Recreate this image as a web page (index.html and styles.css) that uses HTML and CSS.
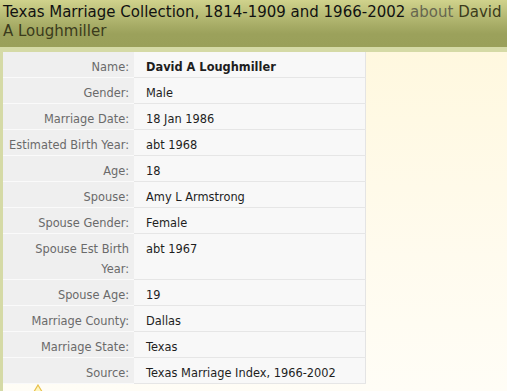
FILE: index.html
```html
<!DOCTYPE html>
<html>
<head>
<meta charset="utf-8">
<link rel="stylesheet" href="styles.css">
</head>
<body>
<div class="header">
  <h1 class="title">Texas Marriage Collection, 1814-1909 and 1966-2002 <span class="about">about</span> <span class="person">David A Loughmiller</span></h1>
</div>
<div class="content">
  <table class="record">
    <tr><th>Name:</th><td class="strong">David A Loughmiller</td></tr>
    <tr><th>Gender:</th><td>Male</td></tr>
    <tr><th>Marriage Date:</th><td>18 Jan 1986</td></tr>
    <tr><th>Estimated Birth Year:</th><td>abt 1968</td></tr>
    <tr><th>Age:</th><td>18</td></tr>
    <tr><th>Spouse:</th><td>Amy L Armstrong</td></tr>
    <tr><th>Spouse Gender:</th><td>Female</td></tr>
    <tr><th>Spouse Est Birth Year:</th><td>abt 1967</td></tr>
    <tr><th>Spouse Age:</th><td>19</td></tr>
    <tr><th>Marriage County:</th><td>Dallas</td></tr>
    <tr><th>Marriage State:</th><td>Texas</td></tr>
    <tr><th>Source:</th><td>Texas Marriage Index, 1966-2002</td></tr>
  </table>
  <div class="note">
    <svg class="warn" width="14" height="12" viewBox="0 0 14 12"><path d="M7 1 L13 11 L1 11 Z" fill="#fff6c0" stroke="#e8c04a" stroke-width="1.2"/></svg>
  </div>
</div>
</body>
</html>
```
FILE: styles.css
```css
html, body {
  margin: 0;
  padding: 0;
}
body {
  background: #fffbee;
  font-family: "DejaVu Sans", Verdana, sans-serif;
  overflow: hidden;
  height: 391px;
}
.header {
  height: 47px;
  padding: 0 3px;
  background: linear-gradient(to bottom, #d0d28c 0px, #a9ae68 24px, #9ba15b 34px, #9aa05a 47px);
  box-sizing: border-box;
}
.title {
  margin: 0;
  padding-top: 3px;
  font-size: 15px;
  font-weight: normal;
  line-height: 19px;
  color: #111;
}
.about {
  color: #66664f;
}
.person {
  color: #3b3b1c;
}
.content {
  border-left: 3px solid #d5daa6;
  border-top: 5px solid #d5daa6;
  background: linear-gradient(to bottom, #fff8df 0%, #fffbee 60%, #fffdf6 100%);
  height: 339px;
  overflow: hidden;
}
.record {
  border-collapse: collapse;
  table-layout: fixed;
  width: 363px;
  border-right: 1px solid #e4e4e4;
  font-size: 11.4px;
}
.record th {
  width: 122px;
  padding: 5px 5px 0 4px;
  background: #efefef;
  color: #6a6a6a;
  font-weight: normal;
  text-align: right;
  vertical-align: top;
  line-height: 20px;
  border-bottom: 1px solid #fafafa;
}
.record td {
  width: 213px;
  padding: 5px 6px 0 12px;
  background: #f8f8f8;
  color: #1e1e1e;
  vertical-align: top;
  line-height: 20px;
  border-bottom: 1px solid #e6e6e6;
}
.record td.strong {
  font-weight: bold;
}
.note {
  padding: 0 0 0 28px;
  height: 14px;
}
.warn {
  display: block;
}
```
